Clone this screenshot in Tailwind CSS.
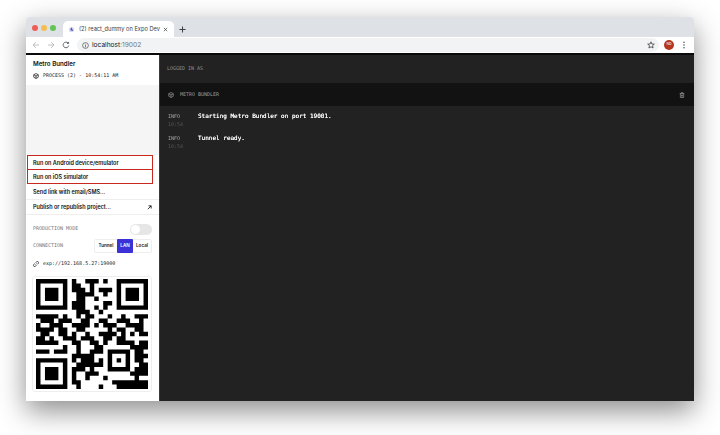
<!doctype html>
<html><head><meta charset="utf-8"><script src="https://cdn.jsdelivr.net/npm/@tailwindcss/browser@4"></script></head>
<body class="bg-white w-[720px] h-[435px] overflow-hidden font-['Inter',sans-serif]">
<div class="ml-[26px] mt-[17px] w-[668px] h-[384px] flex flex-col bg-white rounded-t-[4px] shadow-[0_10px_28px_rgba(0,0,0,0.45)] overflow-hidden">
  <!-- tab strip -->
  <div class="h-[20px] bg-[#dee1e6] flex items-end shrink-0">
    <div class="flex gap-[3.3px] pl-[5.7px] self-start mt-[7.7px] w-[37px] shrink-0">
      <span class="w-[6px] h-[6px] rounded-full bg-[#ed5f56] shrink-0"></span><span class="w-[6px] h-[6px] rounded-full bg-[#f5bd4f] shrink-0"></span><span class="w-[6px] h-[6px] rounded-full bg-[#61c454] shrink-0"></span>
    </div>
    <div class="w-[111px] h-[16px] bg-white rounded-t-[5px] flex items-center pl-[5px] pr-[6px] text-[#3c4043] text-[5.7px]">
      <svg class="w-[7px] h-[7px] mr-[4px] shrink-0" viewBox="0 0 8 8"><circle cx="4" cy="4" r="3" fill="#d5d9ea"/><path d="M4 1.5 L6 6 L2.5 4.5Z" fill="#4a55c8"/></svg>
      <span class="whitespace-nowrap w-[84px] shrink-0">(2) react_dummy on Expo Dev</span>
      <svg class="w-[5px] h-[5px] ml-auto" viewBox="0 0 6 6"><path d="M1 1 5 5M5 1 1 5" stroke="#3c4043" stroke-width=".9"/></svg>
    </div>
    <svg class="w-[7px] h-[7px] ml-[5px] mb-[4px]" viewBox="0 0 8 8"><path d="M4 .5V7.5M.5 4H7.5" stroke="#3c4043" stroke-width="1.2"/></svg>
  </div>
  <!-- toolbar -->
  <div class="h-[16px] bg-white flex items-center shrink-0 pl-[6px] pr-[9px]">
    <svg class="w-[8px] h-[8px]" viewBox="0 0 8 8" fill="none" stroke="#b6b9bd" stroke-width=".9"><path d="M7 4H1M3.8 1.2 1 4l2.8 2.8"/></svg>
    <svg class="w-[8px] h-[8px] ml-[7px]" viewBox="0 0 8 8" fill="none" stroke="#b6b9bd" stroke-width=".9"><path d="M1 4H7M4.2 1.2 7 4 4.2 6.8"/></svg>
    <svg class="w-[8px] h-[8px] ml-[7px]" viewBox="0 0 8 8" fill="none" stroke="#55585c" stroke-width=".9"><path d="M6.7 4.6A2.8 2.8 0 1 1 6 2M6.6.9V2.5H5"/></svg>
    <div class="ml-[7px] w-[582px] h-[14px] bg-[#f1f3f4] rounded-full flex items-center pl-[5px] pr-[4px] shrink-0">
      <svg class="w-[7px] h-[7px]" viewBox="0 0 8 8" fill="none" stroke="#4a4d50" stroke-width=".8"><circle cx="4" cy="4" r="3.3"/><path d="M4 3.4V6M4 2V2.8"/></svg>
      <span class="ml-[3px] text-[6.6px] text-[#202124] leading-none">localhost<span class="text-[#70757a]">:19002</span></span>
      <svg class="w-[8px] h-[8px] ml-auto" viewBox="0 0 8 8" fill="none" stroke="#3c4043" stroke-width=".8"><path d="M4 .8 4.9 3 7.3 3.1 5.5 4.7 6.1 7 4 5.8 1.9 7 2.5 4.7.7 3.1 3.1 3Z"/></svg>
    </div>
    <span class="ml-[5px] w-[10px] h-[10px] rounded-full bg-[#b5371d] flex items-center justify-center text-[3.5px] text-[#f3d8d0] font-semibold shrink-0">ND</span>
    <svg class="w-[2px] h-[8px] ml-[9px] shrink-0" viewBox="0 0 2 8" fill="#55585c"><circle cx="1" cy="1.2" r=".8"/><circle cx="1" cy="4" r=".8"/><circle cx="1" cy="6.8" r=".8"/></svg>
  </div>
  <!-- page -->
  <div class="flex-1 flex min-h-0 border-t-2 border-[#0a0a0a]">
    <aside class="w-[133px] bg-white flex flex-col shrink-0 border-r border-[#3a3a3a] box-content">
      <div class="h-[30px] pl-[7px] pt-[5px]">
        <div class="text-[6.2px] font-semibold text-[#111] leading-[8px]">Metro Bundler</div>
        <div class="flex items-center mt-[4px] font-['DejaVu_Sans_Mono',monospace] text-[5px] text-[#222] leading-[7px]">
          <svg class="w-[6px] h-[6px] mr-[4px]" viewBox="0 0 8 8" fill="none" stroke="#222" stroke-width="1"><path d="M4 .7 7 2.3V5.7L4 7.3 1 5.7V2.3ZM1 2.3 4 4 7 2.3M4 4V7.3"/></svg>
          <span class="whitespace-nowrap">PROCESS (2) - 10:54:11 AM</span>
        </div>
      </div>
      <div class="h-[70px] bg-[#f5f5f5] shrink-0"></div>
      <div class="h-[15px] ml-[1px] w-[126px] border-[1.3px] border-[#c9281e] flex items-center pl-[5px] pt-[1px] text-[5.5px] font-semibold text-[#111] shrink-0">Run on Android device/emulator</div>
      <div class="h-[14px] ml-[1px] w-[126px] border-[1.3px] border-t-0 border-[#c9281e] flex items-center pl-[5px] pt-[2px] text-[5.5px] font-semibold text-[#111] shrink-0">Run on iOS simulator</div>
      <div class="h-[16px] flex items-center pl-[7px] pt-[2px] text-[5.5px] font-semibold text-[#111] border-b border-[#eee] shrink-0">Send link with email/SMS...</div>
      <div class="h-[15px] flex items-center pl-[7px] pr-[7px] pt-[1px] text-[5.5px] font-semibold text-[#111] border-b border-[#eee] shrink-0">
        <span>Publish or republish project...</span>
        <svg class="w-[5px] h-[5px] ml-auto" viewBox="0 0 6 6" fill="none" stroke="#111" stroke-width="1"><path d="M1 5 5 1M1.8 1H5V4.2"/></svg>
      </div>
      <div class="mt-[4px] h-[20px] flex items-center pl-[7px] pr-[7px] font-['DejaVu_Sans_Mono',monospace] text-[5px] text-[#777] shrink-0">
        <span>PRODUCTION MODE</span>
        <span class="ml-auto w-[22px] h-[11px] rounded-full bg-[#e6e6e6] flex items-center pl-[1px]"><span class="w-[9px] h-[9px] rounded-full bg-white"></span></span>
      </div>
      <div class="h-[14px] flex items-center pl-[7px] pr-[7px] font-['DejaVu_Sans_Mono',monospace] text-[5px] text-[#777] shrink-0">
        <span>CONNECTION</span>
        <div class="ml-auto flex h-[14px] items-center font-['Inter',sans-serif] text-[4.6px] font-semibold text-[#222] rounded-[2px] border border-[#eee] w-[58px]">
          <span class="w-[22px] text-center">Tunnel</span>
          <span class="w-[16px] h-[14px] -my-px bg-[#3b31d6] text-white flex items-center justify-center rounded-[1px]">LAN</span>
          <span class="flex-1 text-center">Local</span>
        </div>
      </div>
      <div class="h-[20px] flex items-center pl-[7px] pt-[1px] font-['DejaVu_Sans_Mono',monospace] text-[5px] text-[#222] shrink-0">
        <svg class="w-[6px] h-[6px] mr-[4px]" viewBox="0 0 8 8" fill="none" stroke="#222" stroke-width="1.1"><path d="M3.4 4.6 4.6 3.4M3.5 2.2 4.6 1.1A1.6 1.6 0 0 1 6.9 3.4L5.8 4.5M4.5 5.8 3.4 6.9A1.6 1.6 0 0 1 1.1 4.6L2.2 3.5"/></svg>
        <span>exp://192.168.5.27:19000</span>
      </div>
      <div class="mt-[3px] ml-[6px] w-[120px] h-[116px] border border-[#eee] rounded-[3px] flex items-center justify-center shrink-0">
        <svg class="w-[112px] h-[110px]" viewBox="0 0 25 25" preserveAspectRatio="none" fill="#000">
          <path d="M0 0h7v7h-7zM1 1v5h5v-5zM2 2h3v3h-3zM18 0h7v7h-7zM19 1v5h5v-5zM20 2h3v3h-3zM0 18h7v7h-7zM1 19v5h5v-5zM2 20h3v3h-3z" fill-rule="evenodd"/>
          <path d="M8 0h1v1h-1zM11 0h3v1h-3zM15 0h1v1h-1zM8 1h2v1h-2zM12 1h1v1h-1zM8 2h3v1h-3zM12 2h1v1h-1zM14 2h3v1h-3zM9 3h4v1h-4zM15 3h1v1h-1zM9 4h2v1h-2zM13 4h1v1h-1zM8 5h3v1h-3zM15 5h2v1h-2zM8 6h2v1h-2zM10 6h1v1h-1zM13 6h1v1h-1zM15 6h1v1h-1zM9 7h3v1h-3zM14 7h1v1h-1zM9 8h1v1h-1zM11 8h2v1h-2zM0 8h5v1h-5zM6 8h1v1h-1zM16 8h1v1h-1zM19 8h1v1h-1zM22 8h3v1h-3zM1 9h3v1h-3zM5 9h3v1h-3zM10 9h2v1h-2zM14 9h2v1h-2zM18 9h3v1h-3zM23 9h1v1h-1zM0 10h1v1h-1zM3 10h3v1h-3zM8 10h4v1h-4zM13 10h1v1h-1zM15 10h3v1h-3zM20 10h4v1h-4zM0 11h4v1h-4zM5 11h2v1h-2zM9 11h2v1h-2zM16 11h1v1h-1zM18 11h2v1h-2zM22 11h2v1h-2zM1 12h2v1h-2zM5 12h2v1h-2zM8 12h1v1h-1zM11 12h1v1h-1zM14 12h4v1h-4zM19 12h1v1h-1zM21 12h1v1h-1zM23 12h2v1h-2zM0 13h2v1h-2zM3 13h1v1h-1zM6 13h3v1h-3zM10 13h3v1h-3zM15 13h2v1h-2zM18 13h2v1h-2zM0 14h5v1h-5zM8 14h2v1h-2zM12 14h2v1h-2zM15 14h1v1h-1zM18 14h4v1h-4zM23 14h2v1h-2zM6 15h1v1h-1zM9 15h1v1h-1zM13 15h2v1h-2zM21 15h4v1h-4zM0 16h3v1h-3zM4 16h3v1h-3zM9 16h1v1h-1zM12 16h3v1h-3zM16 16h5v1h-5zM22 16h2v1h-2zM8 17h5v1h-5zM16 17h1v1h-1zM20 17h1v1h-1zM22 17h3v1h-3zM8 18h1v1h-1zM10 18h3v1h-3zM14 18h1v1h-1zM16 18h1v1h-1zM18 18h1v1h-1zM20 18h1v1h-1zM22 18h2v1h-2zM9 19h6v1h-6zM16 19h1v1h-1zM20 19h1v1h-1zM23 19h2v1h-2zM8 20h3v1h-3zM12 20h1v1h-1zM16 20h5v1h-5zM22 20h3v1h-3zM8 21h1v1h-1zM11 21h3v1h-3zM21 21h4v1h-4zM8 22h1v1h-1zM11 22h1v1h-1zM15 22h1v1h-1zM22 22h1v1h-1zM8 23h2v1h-2zM17 23h8v1h-8zM9 24h1v1h-1zM14 24h1v1h-1zM18 24h7v1h-7z"/>
        </svg>
      </div>
    </aside>
    <main class="flex-1 bg-[#222222] flex flex-col font-['DejaVu_Sans_Mono',monospace] min-w-0">
      <div class="h-[28px] flex items-center pl-[7px] text-[5px] text-[#8f8f8f] shrink-0">LOGGED IN AS</div>
      <div class="h-[23px] bg-[#121212] flex items-center pl-[8px] pr-[9px] text-[5px] text-[#9a9a9a] shrink-0">
        <svg class="w-[6px] h-[6px] mr-[6px]" viewBox="0 0 8 8" fill="none" stroke="#8f8f8f" stroke-width="1"><path d="M4 .7 7 2.3V5.7L4 7.3 1 5.7V2.3ZM1 2.3 4 4 7 2.3M4 4V7.3"/></svg>
        <span>METRO BUNDLER</span>
        <svg class="w-[6px] h-[6px] ml-auto" viewBox="0 0 8 8" fill="none" stroke="#8f8f8f" stroke-width="1"><path d="M1 2H7M3 2V.8H5V2M1.8 2V7.3H6.2V2M3.4 3.5V6M4.6 3.5V6"/></svg>
      </div>
      <div class="pt-[6px] pl-[8px] will-change-transform">
        <div class="flex h-[22px]">
          <div class="w-[30px] text-[5px] leading-[8px] text-[#a5a5a5]"><div>INFO</div><div class="text-[#555]">10:54</div></div>
          <div class="text-[6px] leading-[8px] text-white [text-shadow:0_0_0.6px_#ffffff]">Starting Metro Bundler on port 19001.</div>
        </div>
        <div class="flex h-[22px]">
          <div class="w-[30px] text-[5px] leading-[8px] text-[#a5a5a5]"><div>INFO</div><div class="text-[#555]">10:54</div></div>
          <div class="text-[6px] leading-[8px] text-white [text-shadow:0_0_0.6px_#ffffff]">Tunnel ready.</div>
        </div>
      </div>
    </main>
  </div>
</div>
</body></html>
